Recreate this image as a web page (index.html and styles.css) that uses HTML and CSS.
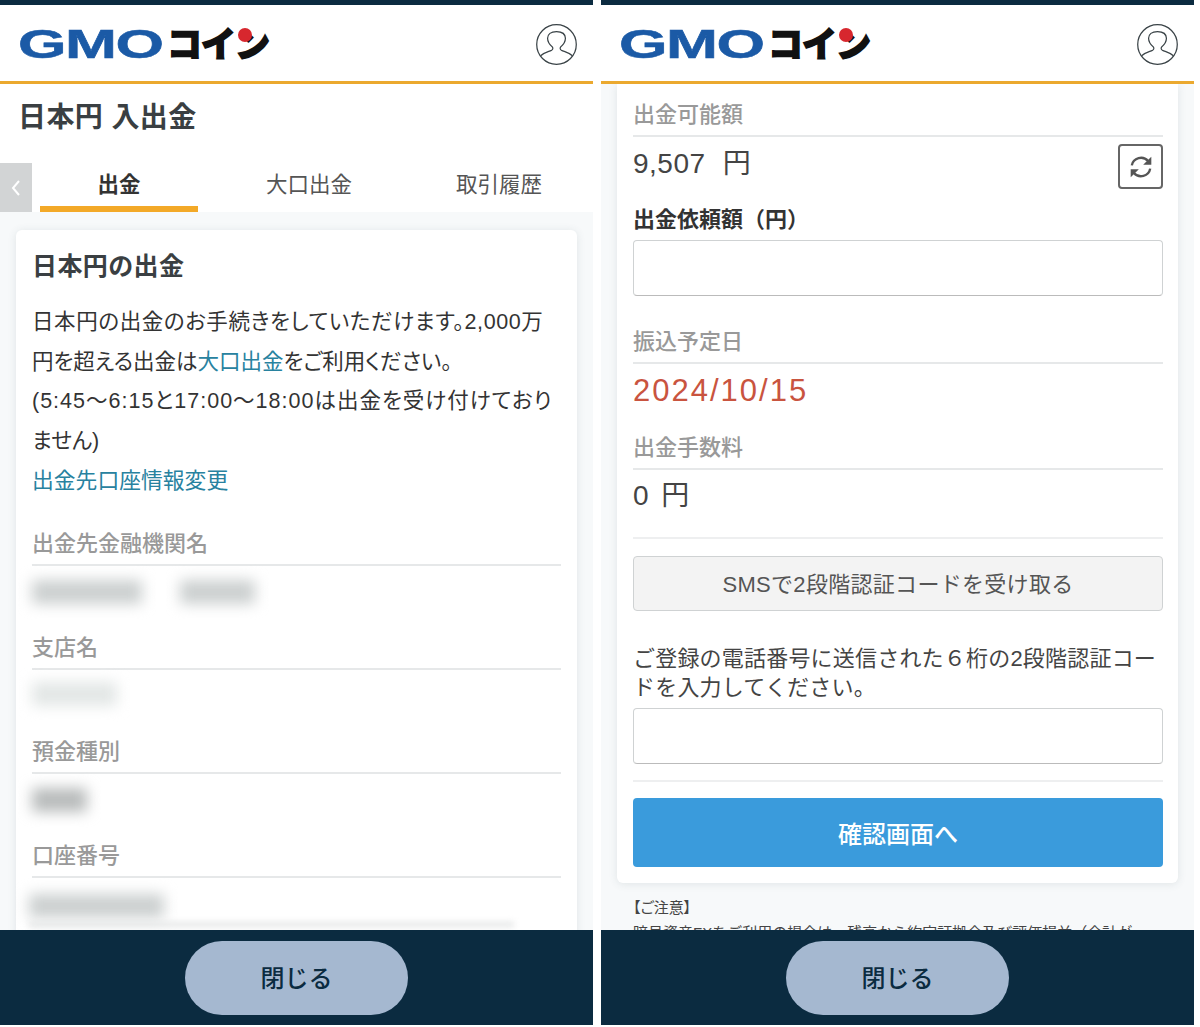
FILE: index.html
```html
<!DOCTYPE html>
<html lang="ja">
<head>
    <meta charset="UTF-8">
    <meta name="viewport" content="width=device-width, initial-scale=1.0">
    <title>日本円 入出金</title>
    <link rel="stylesheet" href="styles.css">
</head>
<body>
    <div class="screens">
        <!-- Left phone -->
        <section class="phone">
            <header class="app-header">
                <div class="logo">
                    <span class="logo-gmo">GMO</span>
                    <span class="logo-coin">コイン</span>
                    <span class="logo-dot"></span>
                </div>
                <svg class="user-icon" viewBox="0 0 40 40" fill="none" stroke="#3a4347" stroke-width="1.2">
                    <circle cx="20" cy="20" r="19.3"/>
                    <path d="M4.500 31C8 27.500 12 27 15 25.700c1.500-.7 1.800-2.200 1-3.200-3-2.500-4.700-6-4.700-8.500 0-4 3.200-6.500 8.700-6.500s8.700 2.500 8.700 6.500c0 2.500-1.700 6-4.700 8.500-.8 1-.5 2.500 1 3.200C28 27 32 27.500 35.500 31"/>
                </svg>
            </header>
            <div class="content">
                <h1 class="page-title">日本円 入出金</h1>
                <nav class="tabs">
                    <span class="tab-back"><svg viewBox="0 0 10 18" fill="none" stroke="#fff" stroke-width="2"><path d="M8 2L2 9l6 7"/></svg></span>
                    <a class="tab active">出金</a>
                    <a class="tab">大口出金</a>
                    <a class="tab">取引履歴</a>
                </nav>
                <div class="card-area">
                    <div class="card">
                        <h2 class="card-title">日本円の出金</h2>
                        <p class="intro"><span class="wide">日本円の出金のお手続きをしていただけます。2,000万</span><br>円を超える出金は<a class="link">大口出金</a>をご利用ください。<br><span class="wider">(5:45～6:15と17:00～18:00は出金を受け付けており</span><br>ません)<br><a class="link link-long">出金先口座情報変更</a></p>
                        <div class="field">
                            <div class="label">出金先金融機関名</div>
                            <div class="blur-row"><span class="blur w110"></span><span class="blur w75"></span></div>
                        </div>
                        <div class="field">
                            <div class="label">支店名</div>
                            <div class="blur-row blur-high"><span class="blur w85 pale"></span></div>
                        </div>
                        <div class="field">
                            <div class="label">預金種別</div>
                            <div class="blur-row"><span class="blur w55 dark"></span></div>
                        </div>
                        <div class="field">
                            <div class="label">口座番号</div>
                            <div class="blur-row blur-last"><span class="blur w130"></span><span class="blur blur-strip"></span></div>
                        </div>
                    </div>
                </div>
            </div>
            <footer class="app-footer"><button class="close-btn">閉じる</button></footer>
        </section>

        <!-- Right phone -->
        <section class="phone">
            <header class="app-header">
                <div class="logo">
                    <span class="logo-gmo">GMO</span>
                    <span class="logo-coin">コイン</span>
                    <span class="logo-dot"></span>
                </div>
                <svg class="user-icon" viewBox="0 0 40 40" fill="none" stroke="#3a4347" stroke-width="1.2">
                    <circle cx="20" cy="20" r="19.3"/>
                    <path d="M4.500 31C8 27.500 12 27 15 25.700c1.500-.7 1.800-2.200 1-3.200-3-2.500-4.700-6-4.700-8.500 0-4 3.200-6.500 8.700-6.500s8.700 2.500 8.700 6.500c0 2.500-1.700 6-4.700 8.500-.8 1-.5 2.500 1 3.200C28 27 32 27.500 35.500 31"/>
                </svg>
            </header>
            <div class="content scrolled">
                <div class="card card-open">
                    <div class="label">出金可能額</div>
                    <div class="value-row">
                        <span class="value">9,507 円</span>
                        <button class="refresh">
                            <svg viewBox="0 0 24 24" fill="none" stroke="#555" stroke-width="2.200">
                                <path d="M3.500 10.500A8.600 8.600 0 0 1 18.500 6.500"/>
                                <path d="M20.500 13.500A8.600 8.600 0 0 1 5.500 17.500"/>
                                <path d="M21.500 2.500v7.500H14z" fill="#555" stroke="none"/>
                                <path d="M2.500 21.500V14H10z" fill="#555" stroke="none"/>
                            </svg>
                        </button>
                    </div>
                    <div class="label-strong">出金依頼額（円）</div>
                    <div class="input"></div>
                    <div class="label sec-date">振込予定日</div>
                    <div class="value date">2024/10/15</div>
                    <div class="label">出金手数料</div>
                    <div class="value fee">0 円</div>
                    <hr class="rule">
                    <button class="sms-btn">SMSで2段階認証コードを受け取る</button>
                    <p class="sms-note">ご登録の電話番号に送信された６桁の2段階認証コー<br>ドを入力してください。</p>
                    <div class="input"></div>
                    <hr class="rule rule-low">
                    <button class="confirm-btn">確認画面へ</button>
                </div>
                <div class="notice">
                    <div class="notice-head">【ご注意】</div>
                    <p class="notice-text">暗号資産FXをご利用の場合は、残高から約定証拠金及び評価損益（合計が</p>
                </div>
            </div>
            <footer class="app-footer"><button class="close-btn">閉じる</button></footer>
        </section>
    </div>
</body>
</html>
```

FILE: styles.css
```css
* {
    margin: 0;
    padding: 0;
    box-sizing: border-box;
}

body {
    font-family: "Liberation Sans", "Noto Sans CJK JP", sans-serif;
    font-feature-settings: "palt";
    background-color: #fff;
    color: #333;
    height: 1027px;
    overflow: hidden;
}

.screens {
    display: flex;
    gap: 8px;
    height: 1025px;
}

.phone {
    width: 593px;
    height: 100%;
    display: flex;
    flex-direction: column;
    border-top: 5px solid #0b2b40;
}

/* Header */
.app-header {
    height: 79px;
    flex: none;
    display: flex;
    justify-content: space-between;
    align-items: center;
    padding: 0 16px 0 18px;
    background-color: #fff;
    border-bottom: 3px solid #eba92f;
}

.logo {
    position: relative;
    display: flex;
    align-items: center;
    height: 40px;
    width: 252px;
    margin-top: 3px;
}

.logo-gmo {
    font-size: 40px;
    font-weight: bold;
    color: #1b5aa6;
    -webkit-text-stroke: 0.5px #1b5aa6;
    transform: scaleX(1.56);
    transform-origin: left center;
    width: 149px;
    flex: none;
    letter-spacing: -1px;
}

.logo-coin {
    flex: none;
    white-space: nowrap;
    font-size: 35px;
    font-weight: 900;
    font-feature-settings: normal;
    color: #111;
    letter-spacing: -1px;
    line-height: 40px;
    -webkit-text-stroke: 1.5px #111;
}

.logo-dot {
    position: absolute;
    left: 220px;
    top: 3px;
    width: 14px;
    height: 14px;
    border-radius: 50%;
    background-color: #d7272e;
}

.user-icon {
    width: 41px;
    height: 41px;
    margin-top: 3px;
}

/* Content */
.content {
    flex: 1;
    overflow: hidden;
    background-color: #fff;
    display: flex;
    flex-direction: column;
}

.page-title {
    font-size: 28px;
    line-height: 34px;
    font-weight: bold;
    font-feature-settings: normal;
    letter-spacing: 0.4px;
    color: #3a3f42;
    padding: 17px 18px 0;
    height: 79px;
    flex: none;
}

.tabs {
    display: flex;
    height: 49px;
    flex: none;
    padding-left: 40px;
    position: relative;
}

.tab-back {
    position: absolute;
    left: 0;
    top: 0;
    width: 32px;
    height: 49px;
    background-color: #d2d4d5;
    display: flex;
    align-items: center;
    justify-content: center;
}

.tab-back svg {
    width: 10px;
    height: 18px;
}

.tab {
    width: 158px;
    flex: none;
    margin-right: 32px;
    text-align: center;
    font-size: 21.500px;
    line-height: 44px;
    color: #555;
}

.tab.active {
    color: #333;
    font-weight: bold;
    border-bottom: 6px solid #f3a928;
}

.card-area {
    flex: 1;
    background-color: #f7f9fa;
    padding: 18px 16px 0;
    overflow: hidden;
}

.card {
    background-color: #fff;
    border-radius: 6px;
    padding: 16px;
    box-shadow: 0 1px 8px rgba(60, 80, 90, 0.12);
}

.card-title {
    font-size: 25px;
    line-height: 40px;
    font-weight: bold;
    font-feature-settings: normal;
    letter-spacing: 0.4px;
    color: #3a3f42;
    margin-bottom: 17px;
}

.intro {
    font-size: 21.500px;
    line-height: 39.500px;
    color: #333;
    white-space: nowrap;
}

.wide {
    letter-spacing: 0.6px;
}

.wider {
    letter-spacing: 1px;
}

.link {
    color: #28829f;
}

.link-long {
    font-size: 21.800px;
    font-feature-settings: normal;
}

.field {
    margin-top: 22px;
}

.field + .field {
    margin-top: 0;
}

.label {
    font-size: 22px;
    line-height: 40px;
    font-weight: 500;
    color: #999;
    border-bottom: 2px solid #e6e8e9;
}

.blur-row {
    display: flex;
    gap: 38px;
    height: 62px;
    padding-top: 14px;
    align-items: flex-start;
}

.blur {
    display: block;
    height: 24px;
    background-color: #ccd0d0;
    filter: blur(7px);
}

.blur.pale {
    background-color: #e3e7e6;
}

.blur.dark {
    background-color: #b9bcbc;
}

.blur-high {
    padding-top: 12px;
}

.blur-last {
    padding-top: 16px;
    flex-direction: column;
    gap: 4px;
    margin-left: -3px;
}

.blur.blur-strip {
    width: 485px;
    height: 5px;
    background-color: #e3e5e5;
    filter: blur(3px);
}

.w130 {
    width: 135px;
}

.w110 {
    width: 110px;
}

.w85 {
    width: 85px;
}

.w75 {
    width: 75px;
}

.w55 {
    width: 55px;
}

/* Right phone */
.content.scrolled {
    background-color: #f7f9fa;
    padding: 0 16px;
}

.card-open {
    border-radius: 0 0 6px 6px;
    padding: 11px 15px 16px 16px;
    flex: none;
    height: 799px;
}

.value-row {
    display: flex;
    justify-content: space-between;
    height: 66px;
    padding-top: 7px;
}

.value {
    font-size: 28px;
    line-height: 40px;
    color: #444;
    letter-spacing: 0.5px;
    word-spacing: 9px;
}

.refresh {
    width: 45px;
    height: 45px;
    background-color: #fff;
    border: 2px solid #666;
    border-radius: 4px;
    display: flex;
    align-items: center;
    justify-content: center;
}

.refresh svg {
    width: 26px;
    height: 26px;
}

.label-strong {
    font-size: 22px;
    line-height: 34px;
    font-weight: bold;
    font-feature-settings: normal;
    color: #333;
    margin-bottom: 3px;
}

.input {
    height: 56px;
    border: 1.500px solid #cfd2d3;
    border-bottom-color: #bbb;
    border-radius: 4px;
    background-color: #fff;
}

.sec-date {
    margin-top: 26px;
}

.date {
    font-size: 31px;
    letter-spacing: 2px;
    color: #c9543f;
    height: 64px;
    padding-top: 7px;
}

.fee {
    height: 67px;
    padding-top: 6px;
    word-spacing: 4px;
}

.rule {
    border: none;
    border-top: 2px solid #eeeff0;
    margin-bottom: 17px;
}

.rule-low {
    margin-top: 16px;
    margin-bottom: 16px;
}

.sms-btn {
    display: block;
    width: 100%;
    height: 55px;
    padding-bottom: 4px;
    font-family: inherit;
    font-feature-settings: normal;
    font-size: 22px;
    letter-spacing: 0.300px;
    color: #555;
    background-color: #f3f3f3;
    border: 1.500px solid #cfd2d3;
    border-radius: 4px;
    margin-bottom: 33px;
}

.sms-note {
    font-size: 22px;
    font-feature-settings: normal;
    letter-spacing: 0.200px;
    line-height: 29px;
    color: #444;
    margin-bottom: 6px;
    white-space: nowrap;
}

.confirm-btn {
    display: block;
    width: 100%;
    height: 69px;
    font-family: inherit;
    font-size: 24px;
    font-weight: 500;
    font-feature-settings: normal;
    color: #fff;
    background-color: #3a9bdc;
    border: none;
    border-radius: 4px;
}

.notice {
    padding: 12px 0 0 16px;
    font-size: 15px;
    line-height: 25px;
    color: #444;
    white-space: nowrap;
}

.notice-text {
    font-feature-settings: normal;
}

/* Footer */
.app-footer {
    height: 95px;
    flex: none;
    display: flex;
    justify-content: center;
    padding-top: 11px;
    background-color: #0b2b40;
    position: relative;
}

.close-btn {
    width: 223px;
    height: 74px;
    padding-bottom: 4px;
    font-family: inherit;
    font-size: 24px;
    font-weight: 500;
    font-feature-settings: normal;
    color: #0b2b40;
    background-color: #a5b8d0;
    border: none;
    border-radius: 37px;
}
```
